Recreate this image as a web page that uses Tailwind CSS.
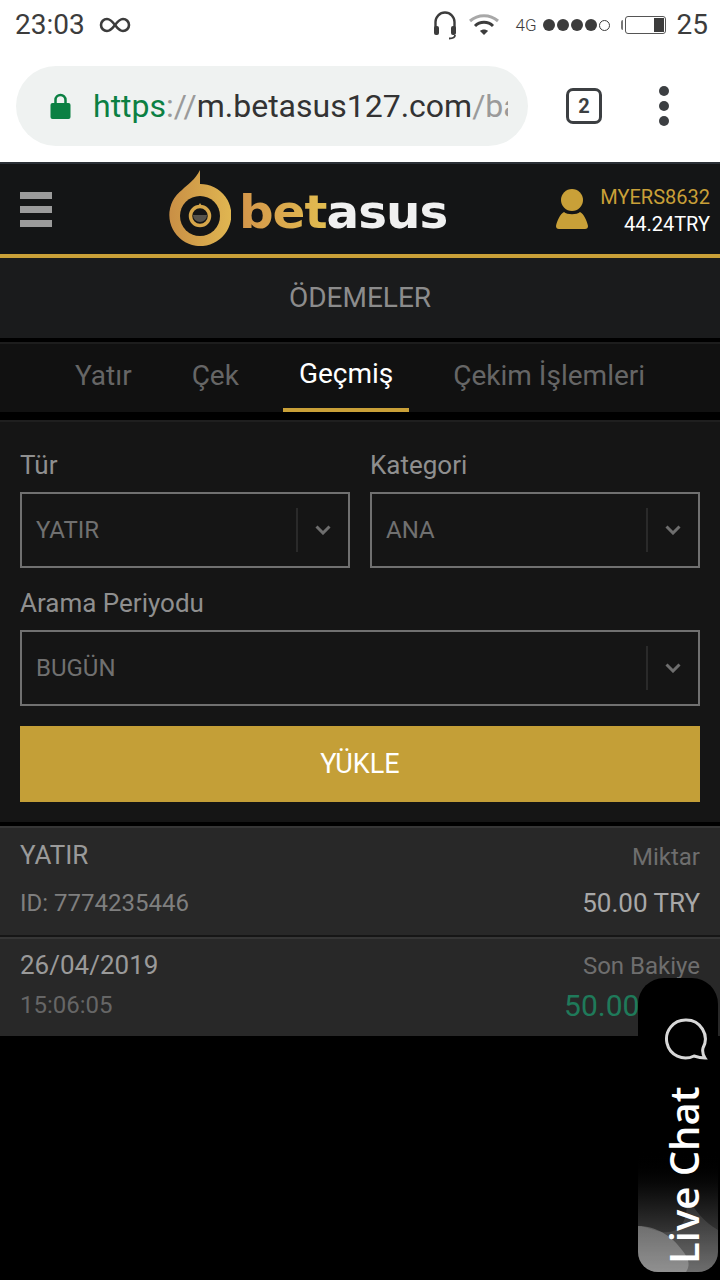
<!DOCTYPE html>
<html lang="tr">
<head>
  <meta charset="UTF-8" />
  <meta name="viewport" content="width=device-width, initial-scale=1" />
  <title>Betasus</title>
  <script src="https://cdn.jsdelivr.net/npm/@tailwindcss/browser@4"></script>
</head>
<body class="bg-black w-[720px] h-[1280px] overflow-hidden relative font-['Roboto',sans-serif]">

  <!-- status bar -->
  <div class="h-[50px] bg-white flex items-center pl-[15px] pr-[12px] text-[#3c3c3c]">
    <span class="text-[28px] leading-none">23:03</span>
    <svg class="ml-[14px]" width="32" height="18" viewBox="0 0 32 18" fill="none" stroke="#3c3c3c" stroke-width="2.6"><path d="M16 9c-3-4-5-6-8-6a6 6 0 0 0 0 12c3 0 5-2 8-6s5-6 8-6a6 6 0 0 1 0 12c-3 0-5-2-8-6z"/></svg>
    <div class="ml-auto flex items-center">
      <svg width="26" height="30" viewBox="0 0 26 30" fill="none"><path d="M3.500 20V12a9.500 9.500 0 0 1 19 0v8" stroke="#3c3c3c" stroke-width="2.400"/><rect x="2" y="16" width="5" height="9" rx="2" fill="#3c3c3c"/><rect x="19" y="16" width="5" height="9" rx="2" fill="#3c3c3c"/><path d="M23 25c0 3-3 3.500-6 3.500" stroke="#3c3c3c" stroke-width="1.800"/></svg>
      <svg class="ml-[10px]" width="32" height="24" viewBox="0 0 32 24" fill="none"><path d="M2 8c8-7 20-7 28 0" stroke="#a8a8a8" stroke-width="3"/><path d="M7 13c5-5 13-5 18 0" stroke="#3c3c3c" stroke-width="3"/><path d="M12 18c2-2 6-2 8 0l-4 4z" fill="#3c3c3c"/></svg>
      <span class="ml-[15px] text-[17px] font-light leading-none">4G</span>
      <div class="ml-[6px] flex items-center gap-[2px]">
        <span class="w-[12px] h-[12px] rounded-full bg-[#3c3c3c]"></span>
        <span class="w-[12px] h-[12px] rounded-full bg-[#3c3c3c]"></span>
        <span class="w-[12px] h-[12px] rounded-full bg-[#3c3c3c]"></span>
        <span class="w-[12px] h-[12px] rounded-full bg-[#3c3c3c]"></span>
        <span class="w-[11px] h-[11px] rounded-full border-[1.500px] border-[#3c3c3c]"></span>
      </div>
      <span class="ml-[11px] w-[2px] h-[10px] rounded-l-full bg-[#777]"></span>
      <div class="ml-[2px] w-[41px] h-[18px] rounded-[3px] border border-[#555] flex justify-end p-[1px]">
        <span class="w-[10px] h-full bg-[#3c3c3c]"></span>
      </div>
      <span class="ml-[11px] text-[28px] leading-none">25</span>
    </div>
  </div>

  <!-- browser bar -->
  <div class="h-[112px] bg-white flex items-center pl-[16px]">
    <div class="w-[512px] h-[80px] rounded-full bg-[#eff2f1] flex items-center pl-[34px] pr-[20px]">
      <svg width="21" height="27" viewBox="0 0 21 27" class="shrink-0"><path d="M5.500 12V7a5 5 0 0 1 10 0v5" fill="none" stroke="#0b8043" stroke-width="2.500"/><rect x="0.500" y="10" width="20" height="16" rx="2" fill="#0b8043"/></svg>
      <div class="ml-[22px] overflow-hidden whitespace-nowrap text-[32px] leading-[40px] text-[#333] flex-1">
        <span class="text-[#0b8043]">https</span><span class="text-[#9a9a9a]">://</span>m.betasus127.com<span class="text-[#9a9a9a]">/ba</span>
      </div>
    </div>
    <div class="ml-[38px] w-[36px] h-[36px] rounded-[7px] border-[3.500px] border-[#3c3f42] flex items-center justify-center text-[#3c3f42] text-[20px] font-bold">2</div>
    <div class="ml-[57px] flex flex-col gap-[5px]">
      <span class="w-[10px] h-[10px] rounded-full bg-[#3c3f42]"></span>
      <span class="w-[10px] h-[10px] rounded-full bg-[#3c3f42]"></span>
      <span class="w-[10px] h-[10px] rounded-full bg-[#3c3f42]"></span>
    </div>
  </div>

  <!-- site header -->
  <div class="h-[92px] bg-[#141516] border-t-2 border-[#2b3036] flex items-center relative">
    <div class="ml-[20px] w-[32px] flex flex-col gap-[7px]">
      <span class="h-[7px] bg-[#9b9b9b]"></span>
      <span class="h-[7px] bg-[#9b9b9b]"></span>
      <span class="h-[7px] bg-[#9b9b9b]"></span>
    </div>
    <svg class="ml-[117px] mt-[-2px]" width="62" height="78" viewBox="0 0 62 78">
      <defs><linearGradient id="ring" x1="0" y1="0" x2="1" y2="0"><stop offset="0" stop-color="#c98f45"/><stop offset="1" stop-color="#e0b651"/></linearGradient></defs>
      <path d="M31 1v14a31 31 0 1 1-18 6c6-6 13-10 18-20z" fill="url(#ring)"/>
      <circle cx="31" cy="47" r="20" fill="#141516"/>
      <circle cx="31" cy="47" r="9.500" fill="none" stroke="#d6a64a" stroke-width="3.500"/>
      <path d="M31 34l3 5h-6z" fill="#d6a64a"/>
      <path d="M24 46h14a7 7 0 0 1-14 0z" fill="#55524c"/>
    </svg>
    <div class="ml-[8px] mt-[4px] text-[47px] leading-none font-bold font-['DejaVu_Sans',sans-serif] tracking-[-1px] w-[208px] whitespace-nowrap origin-left scale-x-[1.03]">
      <span class="bg-gradient-to-r from-[#d3954a] to-[#e2bd50] bg-clip-text text-transparent">bet</span><span class="text-[#f0f0f0]">asus</span>
    </div>
    <svg class="absolute left-[555px] top-[25px]" width="34" height="42" viewBox="0 0 34 42"><circle cx="17" cy="11" r="11" fill="#c9a038"/><path d="M9 23c3 3 13 3 16 0 4 2 7 9 8 14 0 2-1 3-3 3H4c-2 0-3-1-3-3 1-5 4-12 8-14z" fill="#c9a038"/></svg>
    <div class="absolute right-[10px] top-[20px] text-right text-[20px] leading-[27px]">
      <div class="text-[#c9a038]">MYERS8632</div>
      <div class="text-white">44.24TRY</div>
    </div>
  </div>
  <div class="h-[4px] bg-[#c9a038]"></div>

  <!-- page title -->
  <div class="h-[80px] bg-[#1a1b1c] flex items-center justify-center text-[28px] text-[#8c8c8c]">ÖDEMELER</div>

  <!-- tabs -->
  <div class="h-[4px] bg-black"></div>
  <div class="h-[70px] bg-[#111111] border-t-2 border-[#1d1d1d] flex gap-[28px] pl-[59px] text-[28px] text-[#666666]">
    <div class="px-[16px] flex items-center pb-[4px]">Yatır</div>
    <div class="px-[16px] flex items-center pb-[4px]">Çek</div>
    <div class="px-[16px] flex items-center pb-[4px] text-white border-b-4 border-[#c9a038]">Geçmiş</div>
    <div class="px-[16px] flex items-center pb-[4px]">Çekim İşlemleri</div>
  </div>
  <div class="h-[8px] bg-black"></div>

  <!-- filter form -->
  <div class="h-[402px] bg-[#151515] border-t-2 border-[#1f1f1f] px-[20px] pt-[24px]">
    <div class="flex gap-[20px]">
      <div class="w-[330px]">
        <div class="text-[26px] leading-[38px] text-[#8f8f8f]">Tür</div>
        <div class="mt-[8px] h-[76px] border-2 border-[#707070] flex items-center pl-[14px] text-[24px] text-[#707070]">
          <span class="flex-1">YATIR</span>
          <span class="w-[2px] h-[44px] bg-[#2a2a2a]"></span>
          <svg class="mx-[17px]" width="16" height="10" viewBox="0 0 16 10" fill="none"><path d="M1.500 1.500L8 8l6.500-6.500" stroke="#6e6e6e" stroke-width="3"/></svg>
        </div>
      </div>
      <div class="w-[330px]">
        <div class="text-[26px] leading-[38px] text-[#8f8f8f]">Kategori</div>
        <div class="mt-[8px] h-[76px] border-2 border-[#707070] flex items-center pl-[14px] text-[24px] text-[#707070]">
          <span class="flex-1">ANA</span>
          <span class="w-[2px] h-[44px] bg-[#2a2a2a]"></span>
          <svg class="mx-[17px]" width="16" height="10" viewBox="0 0 16 10" fill="none"><path d="M1.500 1.500L8 8l6.500-6.500" stroke="#6e6e6e" stroke-width="3"/></svg>
        </div>
      </div>
    </div>
    <div class="mt-[16px] text-[26px] leading-[38px] text-[#8f8f8f]">Arama Periyodu</div>
    <div class="mt-[8px] h-[76px] border-2 border-[#707070] flex items-center pl-[14px] text-[24px] text-[#707070]">
      <span class="flex-1">BUGÜN</span>
      <span class="w-[2px] h-[44px] bg-[#2a2a2a]"></span>
      <svg class="mx-[17px]" width="16" height="10" viewBox="0 0 16 10" fill="none"><path d="M1.500 1.500L8 8l6.500-6.500" stroke="#6e6e6e" stroke-width="3"/></svg>
    </div>
    <div class="mt-[20px] h-[76px] bg-[#c49f37] flex items-center justify-center text-[27px] text-white">YÜKLE</div>
  </div>
  <div class="h-[4px] bg-black"></div>

  <!-- history -->
  <div class="h-[109px] bg-[#282828] border-t-2 border-[#363636] px-[20px] flex justify-between">
    <div>
      <div class="mt-[8px] text-[26px] leading-[38px] text-[#9a9a9a]">YATIR</div>
      <div class="mt-[10px] text-[24px] leading-[38px] text-[#7f7f7f]">ID: 7774235446</div>
    </div>
    <div class="text-right">
      <div class="mt-[10px] text-[24px] leading-[38px] text-[#6e6e6e]">Miktar</div>
      <div class="mt-[8px] text-[26px] leading-[38px] text-[#a8a8a8]">50.00 TRY</div>
    </div>
  </div>
  <div class="h-[2px] bg-[#161616]"></div>
  <div class="h-[99px] bg-[#282828] border-t-2 border-[#363636] px-[20px] flex justify-between">
    <div>
      <div class="mt-[7px] text-[26px] leading-[38px] text-[#9a9a9a]">26/04/2019</div>
      <div class="mt-[2px] text-[24px] leading-[38px] text-[#666666]">15:06:05</div>
    </div>
    <div class="text-right">
      <div class="mt-[8px] text-[24px] leading-[38px] text-[#6e6e6e]">Son Bakiye</div>
      <div class="mt-[2px] text-[30px] leading-[38px] text-[#1f7a5a]">50.00 TRY</div>
    </div>
  </div>

  <!-- live chat widget -->
  <div class="absolute left-[638px] top-[978px] w-[80px] h-[294px] rounded-t-[26px] rounded-b-[20px] overflow-hidden bg-gradient-to-b from-black from-58% to-[#5e5e5e]">
    <svg class="absolute left-0 bottom-0" width="80" height="100" viewBox="0 0 80 100"><path d="M80 58c-14-8-24-20-32-36 4 30-8 40-24 38-10-2-18-6-24-6v46h80z" fill="#ffffff" fill-opacity="0.1"/><path d="M0 54c18 0 34 10 44 24 8 10 8 16 4 22H0z" fill="#ffffff" fill-opacity="0.24"/></svg>
    <svg class="absolute left-[26px] top-[40px]" width="44" height="44" viewBox="0 0 44 44" fill="none"><path d="M22 2a19 19 0 1 0 8 36c3 1 7 2 11 2-2-3-3-6-2-10A19 19 0 0 0 22 2z" stroke="#d8d8d8" stroke-width="3"/></svg>
    <div class="absolute left-[50%] bottom-[8px] origin-bottom-left rotate-[-90deg] translate-x-[26px] text-[40px] leading-none font-semibold font-['Open_Sans',sans-serif] text-white whitespace-nowrap">Live Chat</div>
  </div>

</body>
</html>
